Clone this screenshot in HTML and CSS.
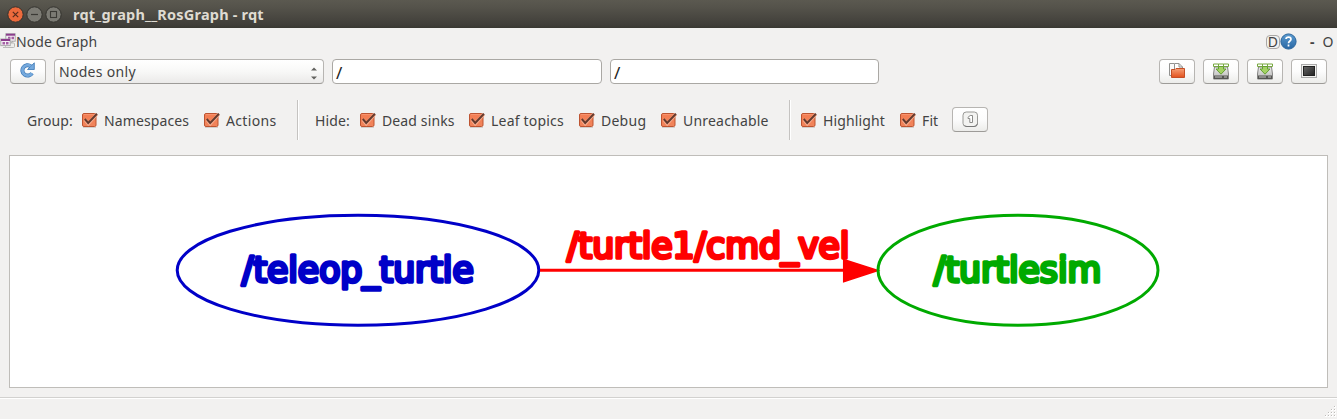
FILE: index.html
```html
<!DOCTYPE html>
<html lang="en">
<head>
<meta charset="utf-8">
<title>rqt_graph__RosGraph - rqt</title>
<link rel="stylesheet" href="styles.css">
</head>
<body>
<svg class="defs" width="0" height="0" aria-hidden="true">
  <defs>
    <linearGradient id="orange" x1="0" y1="0" x2="0" y2="1"><stop offset="0" stop-color="#f47d52"/><stop offset="1" stop-color="#f0855c"/></linearGradient>
    <linearGradient id="folder" x1="0" y1="0" x2="0" y2="1"><stop offset="0" stop-color="#f6a077"/><stop offset="1" stop-color="#e2501c"/></linearGradient>
    <linearGradient id="screen" x1="0" y1="0" x2="1" y2="1"><stop offset="0" stop-color="#666"/><stop offset="1" stop-color="#222"/></linearGradient>
    <linearGradient id="drive" x1="0" y1="0" x2="0" y2="1"><stop offset="0" stop-color="#eee"/><stop offset="1" stop-color="#b5b5b3"/></linearGradient>
    <linearGradient id="help" x1="0" y1="0" x2="0" y2="1"><stop offset="0" stop-color="#5b9bd0"/><stop offset="1" stop-color="#2866a3"/></linearGradient>
    <symbol id="check" viewBox="0 0 17 17">
      <path d="M2 15.5H15" stroke="#d2cfcd"/>
      <rect x="1.5" y="1.5" width="13.5" height="13" rx="1.5" fill="url(#orange)" stroke="#bd5431"/>
      <path d="M2.6 2.6H14" stroke="#f99c78" stroke-width=".8"/>
      <path d="M4 7.8 7.2 11.8 15.8 2.2" fill="none" stroke="#f9b092" stroke-width="3.2"/>
      <path d="M3.8 7 7.2 11 16 1.8" fill="none" stroke="#653a2d" stroke-width="2"/>
    </symbol>
    <symbol id="save" viewBox="0 0 16 17">
      <path d="M1.5 4H14.5L15.5 11V16H.5V11Z" fill="url(#drive)" stroke="#858583"/>
      <path d="M1 12.5H15V16H1Z" fill="#555553"/>
      <path d="M2 14H9M11 14H14" stroke="#c5c5c1"/>
      <path d="M.5 1H5.5V3.5H.5ZM5.5 1H10.5V3.5H5.5ZM10.5 1H15.5V3.5H10.5Z" fill="#fff" stroke="#76a83e"/>
      <path d="M5.5 3.5H10.5V6H13L8 11.2 3 6H5.5Z" fill="#a3d263" stroke="#659e35"/>
    </symbol>
  </defs>
</svg>
<header class="titlebar">
  <svg class="window-controls" width="58" height="28" viewBox="0 0 58 28">
    <circle cx="9.5" cy="14.5" r="7.7" fill="#ed6a3c" stroke="#33322d"/>
    <path d="m6.8 11.8 5.4 5.4m0-5.4-5.4 5.4" stroke="#572b1c" stroke-width="1.2"/>
    <circle cx="28.5" cy="14.5" r="7.7" fill="#7c7b74" stroke="#34332e"/>
    <path d="M25 14.5h7" stroke="#3b3a35" stroke-width="1.2"/>
    <circle cx="47.5" cy="14.5" r="7.7" fill="#7c7b74" stroke="#34332e"/>
    <rect x="44.5" y="11.5" width="6" height="6" fill="none" stroke="#3b3a35" stroke-width="1.1"/>
  </svg>
  <h1 class="title">rqt_graph__RosGraph - rqt</h1>
</header>

<section class="dock-title">
  <svg class="dock-icon" width="16" height="16" viewBox="0 0 16 16">
    <path d="M11 4 4 11M13 8 9 13" stroke="#999"/>
    <rect x="5.5" y="10" width="9" height="4.5" rx="1" fill="#ededeb" stroke="#b9b9b7"/>
    <rect x="5.8" y=".8" width="9.4" height="7.4" fill="#f5edf5" stroke="#aaa"/>
    <path d="M6 1.7H15" stroke="#8b3d8c" stroke-width="2"/>
    <path d="M8 5H10.5M11.5 5H14" stroke="#a35fa4" stroke-width="2.4"/>
    <rect x=".8" y="6" width="9.4" height="6.6" fill="#f5edf5" stroke="#aaa"/>
    <path d="M1 7H10" stroke="#8b3d8c" stroke-width="2"/>
    <path d="M2.5 10.3H5M6 10.3H8.5" stroke="#a35fa4" stroke-width="2.4"/>
    <path d="M3 14.5H8" stroke="#bbb"/>
  </svg>
  <span class="dock-name">Node Graph</span>
  <div class="dock-tools">
    <span class="dock-button">D</span>
    <svg class="help" width="17" height="17" viewBox="0 0 17 17">
      <circle cx="8.5" cy="8.5" r="7.6" fill="url(#help)" stroke="#2b659c"/>
      <path d="M6 6C6.2 3.5 11 3.5 11 6.2 11 8 8.5 8 8.5 10.3M8.5 11.6V13.4" fill="none" stroke="#fff" stroke-width="1.7"/>
    </svg>
    <span class="dock-minimize">-</span>
    <span class="dock-close">O</span>
  </div>
</section>

<section class="toolbar">
  <button class="button" aria-label="Refresh">
    <svg class="refresh" width="16" height="16" viewBox="0 0 16 16">
      <path d="M11.8 4.3A5.2 5.2 0 1 0 13 11.2" fill="none" stroke="#3976b4" stroke-width="4"/>
      <path d="M15.3.8V7.5H8.5Z" fill="#75a9dd" stroke="#3976b4" stroke-width=".8"/>
      <path d="M11.8 4.3A5.2 5.2 0 1 0 13 11.2" fill="none" stroke="#75a9dd" stroke-width="2.7"/>
    </svg>
  </button>
  <div class="select">
    <span class="select-value">Nodes only</span>
    <svg class="select-arrows" width="6" height="13" viewBox="0 0 6 13"><path d="M0 3.5 3 .5 6 3.5ZM0 9.5 3 12.5 6 9.5Z" fill="#62625f"/></svg>
  </div>
  <div class="field">/</div>
  <div class="field topic">/</div>
  <div class="actions">
    <button class="button" aria-label="Open">
      <svg class="open" width="18" height="17" viewBox="0 0 18 17">
        <path d="M1.5 1.5H6L8.5 4V13.5H1.5Z" fill="#fafafa" stroke="#929290"/>
        <path d="M6.5 1.5H11L14.5 5V11H6.5Z" fill="#fff" stroke="#929290"/><path d="M11 1.5V5H14.5" fill="none" stroke="#929290"/>
        <path d="M3.5 7.5H7L8 6.5H16.5V15.5H3.5Z" fill="url(#folder)" stroke="#c44f26"/>
      </svg>
    </button>
    <button class="button" aria-label="Save as DOT"><svg width="16" height="17"><use href="#save"/></svg></button>
    <button class="button" aria-label="Save as SVG"><svg width="16" height="17"><use href="#save"/></svg></button>
    <button class="button" aria-label="Save as image">
      <svg width="16" height="14" viewBox="0 0 16 14"><rect x=".5" y=".5" width="15" height="13" fill="#f1f1ef" stroke="#aaa"/><rect x="2.5" y="2.5" width="11" height="9" fill="url(#screen)" stroke="#222"/></svg>
    </button>
  </div>
</section>

<section class="filters">
  <span class="group-label group">Group:</span>
  <label class="option namespaces"><svg width="17" height="17"><use href="#check"/></svg>Namespaces</label>
  <label class="option last-group"><svg width="17" height="17"><use href="#check"/></svg>Actions</label>
  <i class="separator"></i>
  <span class="group-label hide">Hide:</span>
  <label class="option dead"><svg width="17" height="17"><use href="#check"/></svg>Dead sinks</label>
  <label class="option leaf"><svg width="17" height="17"><use href="#check"/></svg>Leaf topics</label>
  <label class="option debug"><svg width="17" height="17"><use href="#check"/></svg>Debug</label>
  <label class="option unreachable"><svg width="17" height="17"><use href="#check"/></svg>Unreachable</label>
  <i class="separator"></i>
  <label class="option highlight"><svg width="17" height="17"><use href="#check"/></svg>Highlight</label>
  <label class="option fit"><svg width="17" height="17"><use href="#check"/></svg>Fit</label>
  <button class="button fit-button" aria-label="Fit in view">
    <svg width="17" height="17" viewBox="0 0 17 17"><rect x="1" y="1" width="14.5" height="14.5" rx="3.2" fill="#f3f3f1" stroke="#999996"/><path d="M2.5 14.5Q3.5 15.5 5 15.5H12Q15 15.5 15.5 12.5" fill="none" stroke="#777"/><path d="M6 6.3 8.2 4.5H10.5V11.5H7.8V7.5H6Z" fill="#fff" stroke="#8b8b89"/></svg>
  </button>
</section>

<main class="canvas">
  <svg class="graph" width="1317" height="231" viewBox="10 156 1317 231">
    <g class="node blue"><ellipse cx="358" cy="270.2" rx="180.8" ry="55"/><text x="241.8" y="282" textLength="232">/teleop_turtle</text></g>
    <g class="edge"><path d="M540 270.3H845"/><path class="arrow" d="M843.7 259.5V281.8L878 270.5Z"/><text x="567" y="258.3" textLength="282.5">/turtle1/cmd_vel</text></g>
    <g class="node green"><ellipse cx="1018" cy="270.2" rx="140" ry="55"/><text x="933.8" y="282" textLength="167.5">/turtlesim</text></g>
  </svg>
</main>
<footer class="statusbar">
  <svg width="12" height="12" viewBox="0 0 12 12"><path d="M9 1h2M6 4h2M9 4h2M3 7h2M6 7h2M9 7h2M0 10h2M3 10h2M6 10h2M9 10h2" stroke="#fff" stroke-width="2"/><path d="M9 .5h1M6 3.5h1M9 3.5h1M3 6.5h1M6 6.5h1M9 6.5h1M0 9.5h1M3 9.5h1M6 9.5h1M9 9.5h1" stroke="#bdbbb8"/></svg>
</footer>
</body>
</html>
```
FILE: styles.css
```css
* { box-sizing: border-box; }
body {
  margin: 0;
  height: 419px;
  display: flex;
  flex-direction: column;
  overflow: hidden;
  background: #f2f1f0;
  color: #434343;
  font: 14px/20px "Noto Sans", sans-serif;
  letter-spacing: .12px;
}
svg { display: block; flex: none; }
.defs { position: absolute; }
.titlebar {
  height: 28px;
  display: flex;
  align-items: center;
  padding-left: 6px;
  background: linear-gradient(#5b5950 0, #55534b 25%, #403e39 90%, #393832);
}
.title {
  margin: 0;
  padding-left: 9px;
  font-size: 14.5px;
  line-height: 27px;
  font-weight: 700;
  color: #dfdbd2;
  letter-spacing: .2px;
}
.dock-title { height: 28px; display: flex; align-items: center; }
.dock-icon { margin-bottom: 2px; }
.dock-tools { display: flex; align-items: center; margin-left: auto; width: 71px; }
.dock-button {
  width: 14px;
  height: 14px;
  border: 1px solid #aaa8a5;
  border-radius: 4px;
  line-height: 12px;
  text-align: center;
}
.help { margin-bottom: 2px; }
.dock-minimize { margin-left: 13px; font-weight: 700; }
.dock-close { margin-left: 8px; }
.toolbar { height: 30px; display: flex; align-items: center; gap: 8px; padding: 0 10px; }
.button {
  width: 36px;
  height: 25px;
  padding: 0;
  display: grid;
  place-items: center;
  border: 1px solid #b7b5b2;
  border-bottom-color: #9d9b98;
  border-radius: 4px;
  background: linear-gradient(#fff, #fcfcfc 50%, #ececea);
}
.refresh { margin: 0 2px 2px 0; }
.open { margin-bottom: 1px; }
.select {
  width: 270px;
  height: 25px;
  padding: 0 6px 0 4px;
  display: flex;
  justify-content: space-between;
  align-items: center;
  border: 1px solid #b7b5b2;
  border-bottom-color: #9d9b98;
  border-radius: 4px;
  background: linear-gradient(#fff, #f8f8f7 50%, #ebeae9);
}
.select-value { padding-top: 2px; letter-spacing: .3px; }
.select-arrows { margin-top: 4px; }
.field {
  width: 270px;
  height: 25px;
  padding-left: 3px;
  border: 1px solid #aaa8a4;
  border-radius: 4px;
  background: #fff;
  color: #222;
  font-size: 17px;
  line-height: 25px;
}
.topic { width: 269px; }
.actions { display: flex; gap: 8px; margin-left: auto; }
.filters { height: 69px; display: flex; align-items: center; padding: 0 0 1px 27px; }
.group { width: 54px; padding-top: 2px; }
.hide { width: 44px; padding-top: 2px; }
.option { display: flex; align-items: center; gap: 6px; padding-top: 2px; }
.option svg { margin-bottom: 1px; }
.namespaces { width: 122px; }
.last-group { width: 94px; letter-spacing: .35px; }
.separator { width: 2px; height: 40px; margin-right: 16px; border-left: 1px solid #c5c3c1; background: #fff; }
.dead { width: 109px; }
.leaf { width: 110px; letter-spacing: .2px; }
.debug { width: 82px; letter-spacing: .25px; }
.unreachable { width: 129px; letter-spacing: .2px; }
.highlight { width: 99px; margin-left: -7px; }
.fit { width: 53px; }
.fit-button { margin-bottom: 1px; }
.canvas { width: 1319px; height: 233px; margin-left: 9px; border: 1px solid #bfbdb9; background: #fff; }
.graph text { font: 34.7px "DejaVu Sans", sans-serif; letter-spacing: 0; stroke-width: 3.5; stroke-linejoin: round; }
.graph ellipse { fill: none; stroke-width: 3; }
.blue { fill: #0000c8; stroke: #0000c8; }
.green { fill: #00aa00; stroke: #00aa00; }
.edge { fill: #f00; stroke: #f00; stroke-width: 3; }
.arrow { stroke-width: 1.5; }
.statusbar {
  height: 22px;
  margin-top: 9px;
  display: flex;
  justify-content: flex-end;
  align-items: flex-end;
  padding: 0 0 1px;
  border-top: 1px solid #d2d1cf;
  box-shadow: inset 0 1px #fff;
}
```
